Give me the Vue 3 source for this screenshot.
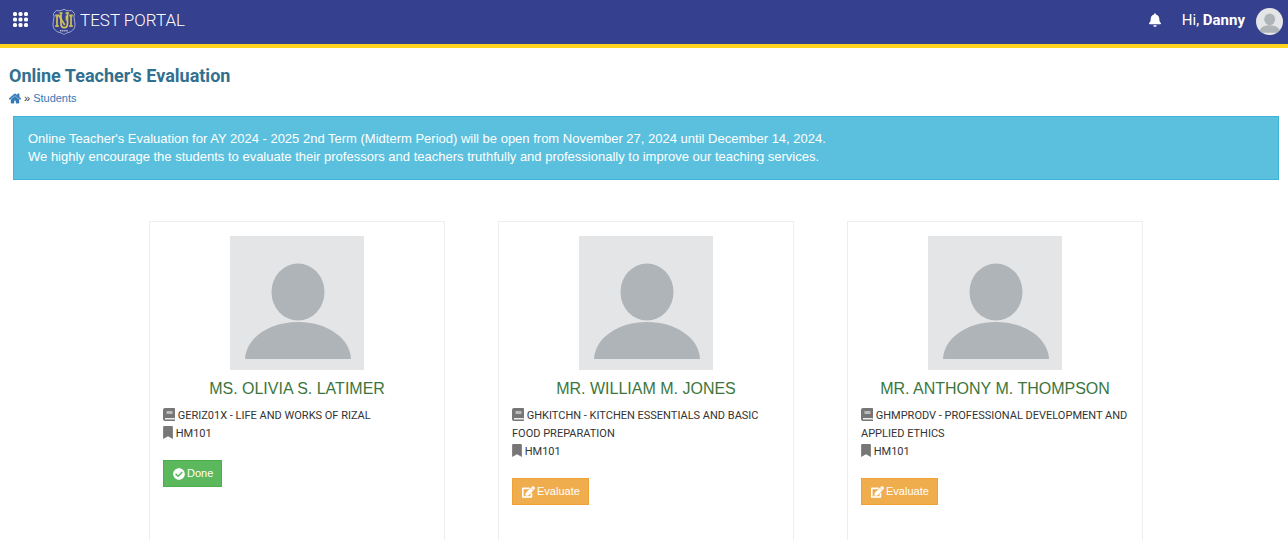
<template>
  <div class="portal">
    <header class="topbar">
      <button class="apps" type="button" aria-label="Applications">
        <svg viewBox="0 0 16 16" width="16" height="16">
          <rect v-for="n in 9" :key="n" :x="1 + ((n - 1) % 3) * 5.5" :y="((n - 1) - (n - 1) % 3) / 3 * 5.5" width="4" height="4" rx="1.5" fill="#fff" />
        </svg>
      </button>
      <a class="brand" href="#">
        <svg class="crest" viewBox="0 0 24 28" width="24" height="28" fill="none">
          <path d="M12 1.2C9.6 3 6.4 3.2 4.4 2.4L1.4 5.6C3 9 1 12.5 1 16.5c0 5.200 3.800 7.300 7.400 8.300 1.800.5 3 1.200 3.600 1.900.6-.7 1.800-1.400 3.600-1.900 3.600-1 7.400-3.100 7.400-8.300 0-4-2-7.500-.4-10.900l-3-3.200C17.600 3.200 14.400 3 12 1.200z" stroke="#a9add3" stroke-width="1" />
          <path d="M3.200 7.500h3.600l6 9.500M5 7.500V18M3.200 18.200h3.600M19 7.500V18M17.200 7.500h3.600M17.200 18.200h3.600M14.500 7.500v5" stroke="#c9ba5c" stroke-width="1.800" />
          <path d="M9 5v10.500c0 5.500 6.500 5.500 6.500 0V5M7.500 5h3M13.500 5h3.500" stroke="#d4c35a" stroke-width="1.700" />
          <path d="M8 22.800h8" stroke="#b9bcdb" stroke-width="1.600" stroke-dasharray="1.400 .7" />
        </svg>
        <span>TEST PORTAL</span>
      </a>
      <div class="account">
        <button class="bell" type="button" aria-label="Notifications">
          <svg viewBox="0 0 448 512" width="12" height="14" fill="#fff"><path :d="icons.bell" /></svg>
        </button>
        <span class="greeting">Hi, <b>Danny</b></span>
        <svg class="avatar" viewBox="0 0 134 134" width="27" height="27">
          <rect width="134" height="134" fill="#e4e5e7" />
          <ellipse cx="68" cy="56" rx="27" ry="29" fill="#aeb4b8" />
          <path d="M15 123C17 98 40 86 68 86s51 12 53 37z" fill="#aeb4b8" />
        </svg>
      </div>
    </header>

    <main>
      <h1>Online Teacher's Evaluation</h1>
      <nav class="crumbs" aria-label="Breadcrumb">
        <a href="#" aria-label="Home">
          <svg viewBox="0 0 576 512" width="12" height="11" fill="#337ab7"><path :d="icons.home" stroke="#337ab7" stroke-width="20" /></svg>
        </a>
        <span>»</span>
        <a href="#">Students</a>
      </nav>

      <div class="notice">
        Online Teacher's Evaluation for AY 2024 - 2025 2nd Term (Midterm Period) will be open from November 27, 2024 until December 14, 2024.<br>
        We highly encourage the students to evaluate their professors and teachers truthfully and professionally to improve our teaching services.
      </div>

      <section class="teachers">
        <article v-for="t in teachers" :key="t.name" class="card">
          <svg class="photo" viewBox="0 0 134 134" width="134" height="134">
            <rect width="134" height="134" fill="#e4e5e7" />
            <ellipse cx="68" cy="56" rx="26.500" ry="28.500" fill="#aeb4b8" />
            <path d="M15 123C16 102 39 86 68 86s52 16 53 37z" fill="#aeb4b8" />
          </svg>
          <h2>{{ t.name }}</h2>
          <p>
            <svg class="icon" viewBox="0 0 12 13" width="12" height="13">
              <path d="M2 0h9.500l.5.500v9l-.6.800v1.500l.6.300v.9H2a2 2 0 0 1-2-2V2a2 2 0 0 1 2-2z" />
              <path d="M3.500 3h6v3h-6z" fill="#bbb" />
              <path d="M2 10h9v1.500H2z" fill="#eee" />
            </svg>
            {{ t.subject }}
          </p>
          <p>
            <svg class="icon" viewBox="0 0 384 512" width="10" height="13"><path :d="icons.bookmark" /></svg>
            {{ t.section }}
          </p>
          <button class="btn" :class="t.done ? 'btn-done' : 'btn-evaluate'" type="button">
            <svg v-if="t.done" viewBox="0 0 512 512" width="12" height="12"><path :d="icons.check" /></svg>
            <svg v-else viewBox="0 0 576 512" width="13" height="12"><path :d="icons.edit" stroke="#fff" stroke-width="16" /></svg>
            {{ t.done ? 'Done' : 'Evaluate' }}
          </button>
        </article>
      </section>
    </main>
  </div>
</template>

<script setup>
const teachers = [
  { name: 'MS. OLIVIA S. LATIMER', subject: 'GERIZ01X - LIFE AND WORKS OF RIZAL', section: 'HM101', done: true },
  { name: 'MR. WILLIAM M. JONES', subject: 'GHKITCHN - KITCHEN ESSENTIALS AND BASIC FOOD PREPARATION', section: 'HM101', done: false },
  { name: 'MR. ANTHONY M. THOMPSON', subject: 'GHMPRODV - PROFESSIONAL DEVELOPMENT AND APPLIED ETHICS', section: 'HM101', done: false },
]

const icons = {
  bell: 'M224 512c35.320 0 63.970-28.650 63.970-64H160.030c0 35.350 28.650 64 63.970 64zm215.390-149.710c-19.320-20.760-55.470-51.990-55.470-154.290 0-77.700-54.480-139.900-127.940-155.160V32c0-17.670-14.320-32-31.980-32s-31.980 14.330-31.980 32v20.840C118.560 68.100 64.080 130.300 64.080 208c0 102.300-36.150 133.530-55.470 154.290-6 6.450-8.660 14.160-8.610 21.710.11 16.400 12.980 32 32.100 32h383.800c19.120 0 32-15.600 32.100-32 .05-7.550-2.610-15.270-8.610-21.710z',
  home: 'M280.370 148.260L96 300.110V464a16 16 0 0 0 16 16l112.060-.29a16 16 0 0 0 15.920-16V368a16 16 0 0 1 16-16h64a16 16 0 0 1 16 16v95.640a16 16 0 0 0 16 16.050L464 480a16 16 0 0 0 16-16V300L295.670 148.260a12.190 12.190 0 0 0-15.300 0zM571.600 251.470L488 182.560V44.050a12 12 0 0 0-12-12h-56a12 12 0 0 0-12 12v72.610L318.470 43a48 48 0 0 0-61 0L4.340 251.470a12 12 0 0 0-1.600 16.900l25.500 31A12 12 0 0 0 45.150 301l235.220-193.740a12.190 12.190 0 0 1 15.300 0L530.900 301a12 12 0 0 0 16.900-1.600l25.500-31a12 12 0 0 0-1.700-16.930z',
  bookmark: 'M0 512V48C0 21.490 21.490 0 48 0h288c26.510 0 48 21.490 48 48v464L192 400 0 512z',
  check: 'M504 256c0 136.967-111.033 248-248 248S8 392.967 8 256 119.033 8 256 8s248 111.033 248 248zM227.314 387.314l184-184c6.248-6.248 6.248-16.379 0-22.627l-22.627-22.627c-6.248-6.249-16.379-6.249-22.628 0L216 308.118l-70.059-70.059c-6.248-6.248-16.379-6.248-22.628 0l-22.627 22.627c-6.248 6.248-6.248 16.379 0 22.627l104 104c6.249 6.249 16.379 6.249 22.628.001z',
  edit: 'M402.600 83.200l90.200 90.200c3.800 3.800 3.800 10 0 13.800L274.400 405.600l-92.800 10.300c-12.400 1.400-22.900-9.100-21.500-21.500l10.300-92.800L388.800 83.200c3.800-3.800 10-3.800 13.800 0zm162-22.900l-48.800-48.800c-15.200-15.200-39.900-15.200-55.200 0l-35.400 35.400c-3.800 3.800-3.800 10 0 13.800l90.200 90.200c3.800 3.800 10 3.800 13.800 0l35.400-35.400c15.200-15.300 15.200-40 0-55.200zM384 346.200V448H64V128h229.800c3.200 0 6.200-1.300 8.500-3.500l40-40c7.600-7.600 2.200-20.500-8.500-20.500H48C21.500 64 0 85.500 0 112v352c0 26.500 21.500 48 48 48h352c26.500 0 48-21.500 48-48V306.200c0-10.700-12.900-16-20.500-8.500l-40 40c-2.200 2.300-3.500 5.300-3.500 8.500z',
}
</script>

<style>
body {
  margin: 0;
  background: #fff;
}
</style>

<style scoped>
.portal {
  font-family: "Liberation Sans", Arial, sans-serif;
  font-size: 13px;
  line-height: 18px;
  color: #333;
}

.topbar {
  display: flex;
  align-items: center;
  height: 44px;
  padding: 0 5px 0 12px;
  background: #35408e;
  border-bottom: 4px solid #ffd41c;
  font-family: Roboto, sans-serif;
  color: #fff;
}

.apps,
.bell {
  display: flex;
  padding: 0;
  border: 0;
  background: none;
  cursor: pointer;
}

.apps {
  margin-bottom: 4px;
}

.brand {
  display: flex;
  align-items: center;
  gap: 4px;
  margin-left: 24px;
  font-size: 17px;
  font-weight: 300;
  line-height: 40px;
  color: #fff;
  text-decoration: none;
}

.brand span {
  padding-bottom: 4px;
}

.account {
  display: flex;
  align-items: center;
  margin-left: auto;
  padding-bottom: 1px;
}

.bell {
  margin: 0 21px 3px 0;
}

.greeting {
  padding-bottom: 3px;
  margin-right: 11px;
  font-size: 15px;
}

.avatar {
  border-radius: 50%;
}

h1 {
  margin: 0;
  padding: 16px 9px 0;
  font-family: Roboto, sans-serif;
  font-size: 18px;
  font-weight: 700;
  line-height: 24px;
  color: #31708f;
}

.crumbs {
  display: flex;
  align-items: center;
  gap: 3px;
  padding: 1px 9px 0;
  font-size: 11px;
}

.crumbs a {
  display: flex;
  color: #337ab7;
  text-decoration: none;
}

.notice {
  margin: 9px 9px 0 13px;
  padding: 13px 14px;
  min-height: 36px;
  background: #5bc0de;
  border: 1px solid #3db5d8;
  color: #fff;
}

.teachers {
  display: grid;
  grid-template-columns: repeat(3, 1fr);
  gap: 53px;
  padding: 41px 145px 20px 149px;
}

.card {
  min-height: 330px;
  padding: 14px 13px;
  border: 1px solid #eee;
  font-size: 11px;
}

.photo {
  display: block;
  margin: 0 auto;
}

h2 {
  margin: 9px 0 8px;
  font-size: 16px;
  font-weight: 400;
  line-height: 20px;
  text-align: center;
  color: #3c763d;
}

p {
  margin: 0;
  font-family: Roboto, sans-serif;
}

.icon {
  fill: #777;
  vertical-align: -2px;
}

.btn {
  display: flex;
  align-items: center;
  gap: 2px;
  margin-top: 17px;
  padding: 4px 8px 4px 9px;
  border: 1px solid;
  font: inherit;
  line-height: 17px;
  color: #fff;
  cursor: pointer;
}

.btn svg {
  fill: #fff;
}

.btn-done {
  background: #5cb85c;
  border-color: #4cae4c;
}

.btn-evaluate {
  background: #f0ad4e;
  border-color: #eea236;
}
</style>
